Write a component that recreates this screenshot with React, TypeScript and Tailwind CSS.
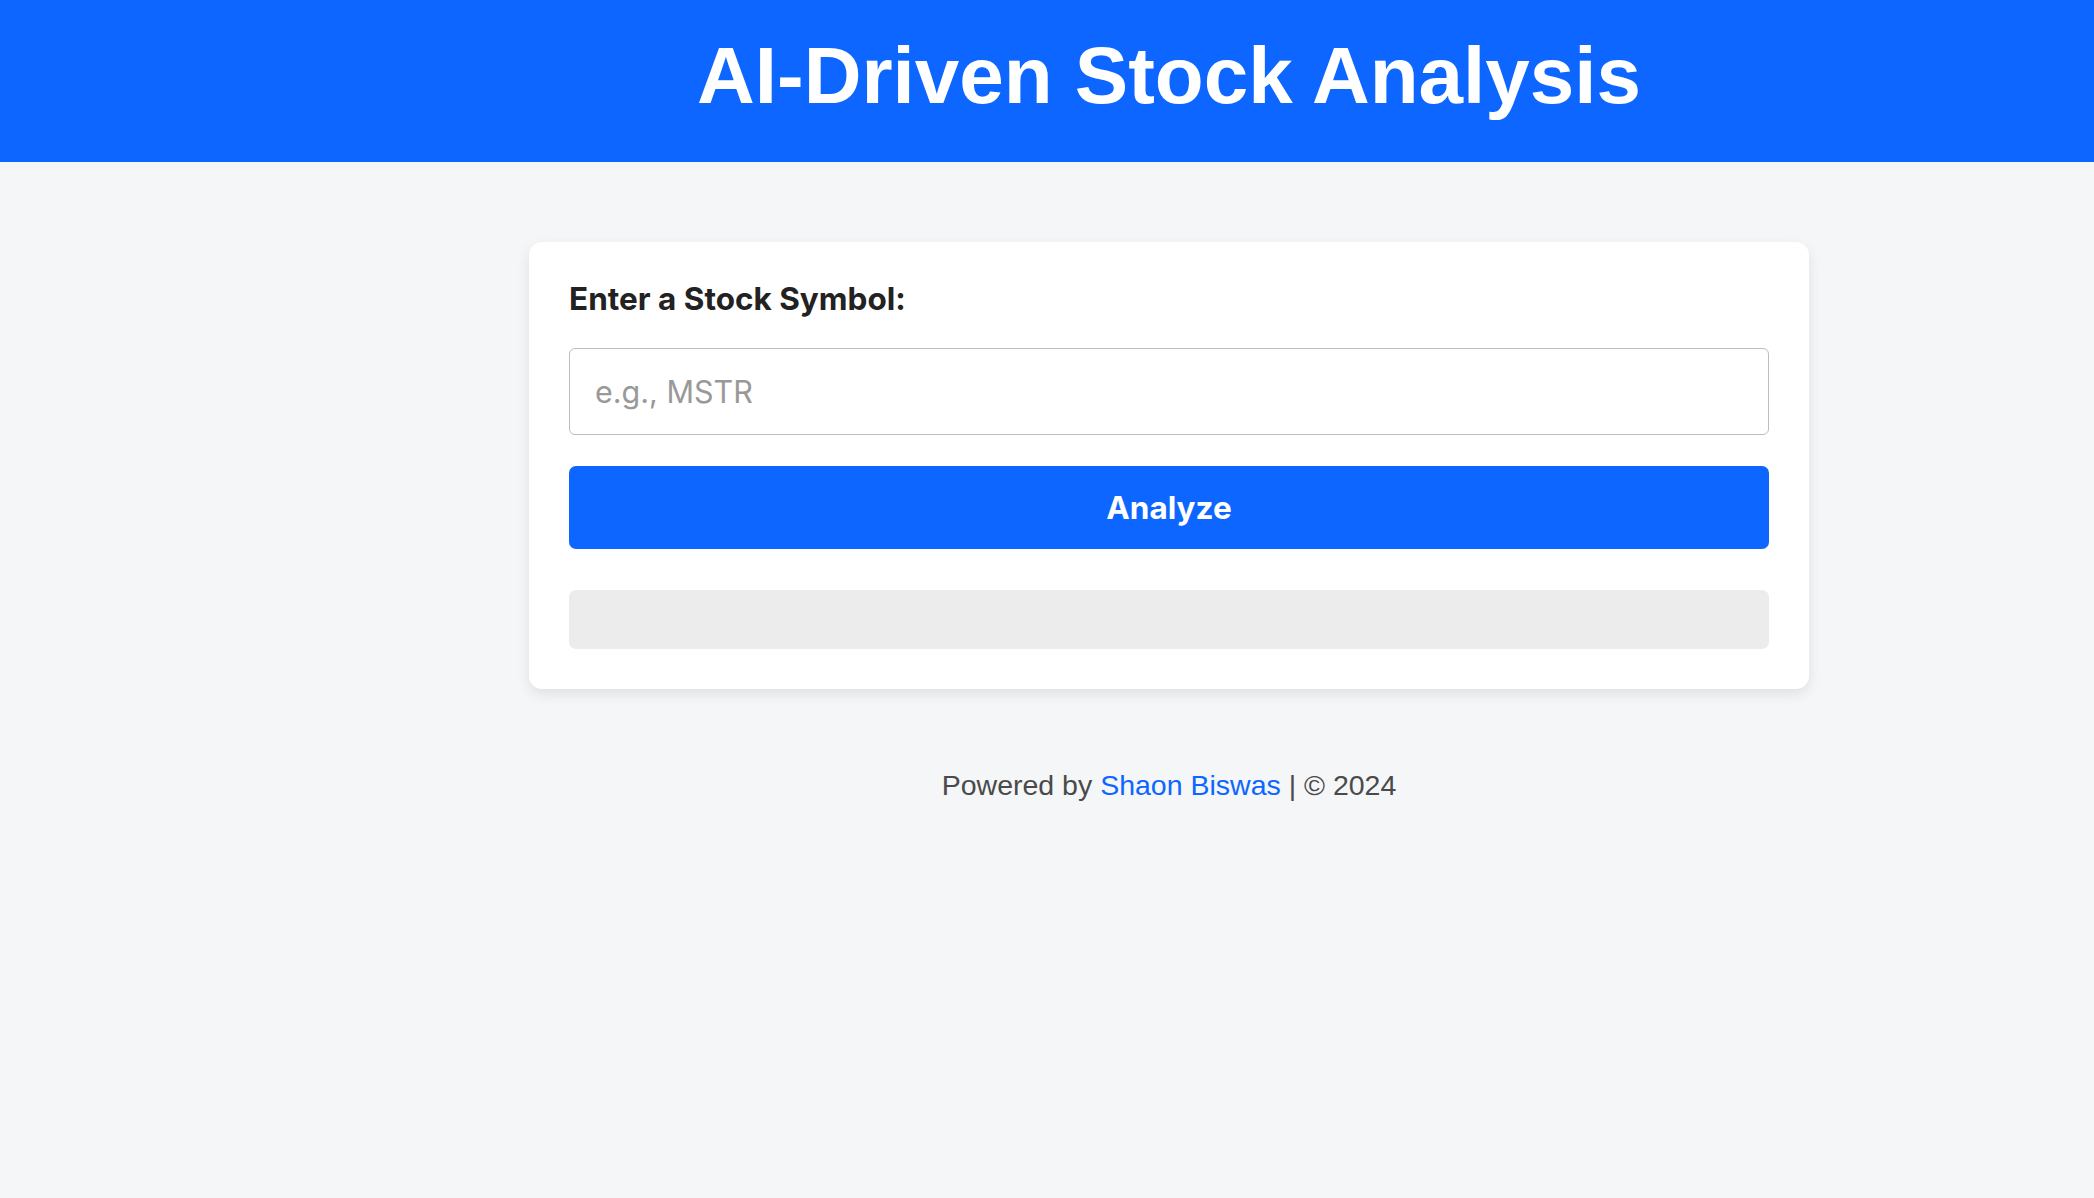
import React from "react";

export default function App() {
  return (
    <div className="min-h-[1198px] bg-[#f5f6f8]">
      <header className="h-[162px] bg-[#0d66ff] pl-[244px]">
        <h1
          className="pt-[30px] text-center text-[80px] font-bold leading-[92px] text-white"
          style={{ fontFamily: '"Liberation Sans", Arial, sans-serif' }}
        >
          AI-Driven Stock Analysis
        </h1>
      </header>
      <main className="pl-[244px]">
        <div className="mx-auto mt-[80px] w-[1280px] rounded-[13px] bg-white p-[40px] shadow-[0_5px_14px_rgba(0,0,0,0.09)]">
          <label
            className="block text-[31.5px] font-bold leading-[34px] text-[#222222]"
            style={{ fontFamily: 'Inter, "Noto Sans", sans-serif' }}
          >
            Enter a Stock Symbol:
          </label>
          <input
            type="text"
            placeholder="e.g., MSTR"
            className="mt-[32px] box-border block h-[87px] w-full rounded-[6px] border-[1.5px] border-[#bdbdbd] bg-white px-[25px] text-[30.5px] text-[#222] outline-none placeholder:text-[#999999]"
            style={{ fontFamily: 'Inter, "Noto Sans", sans-serif' }}
          />
          <button
            className="mt-[31px] block h-[83px] w-full rounded-[7px] bg-[#0d66ff] text-[31.5px] font-bold text-white"
            style={{ fontFamily: 'Inter, "Noto Sans", sans-serif' }}
          >
            Analyze
          </button>
          <div className="mt-[41px] h-[59px] rounded-[7px] bg-[#ececec]" />
        </div>
        <footer
          className="mt-[75px] text-center text-[28.5px] text-[#4a4a4a]"
          style={{ fontFamily: '"Liberation Sans", Arial, sans-serif' }}
        >
          Powered by <a href="#" className="text-[#0d66ff]">Shaon Biswas</a> | © 2024
        </footer>
      </main>
    </div>
  );
}
